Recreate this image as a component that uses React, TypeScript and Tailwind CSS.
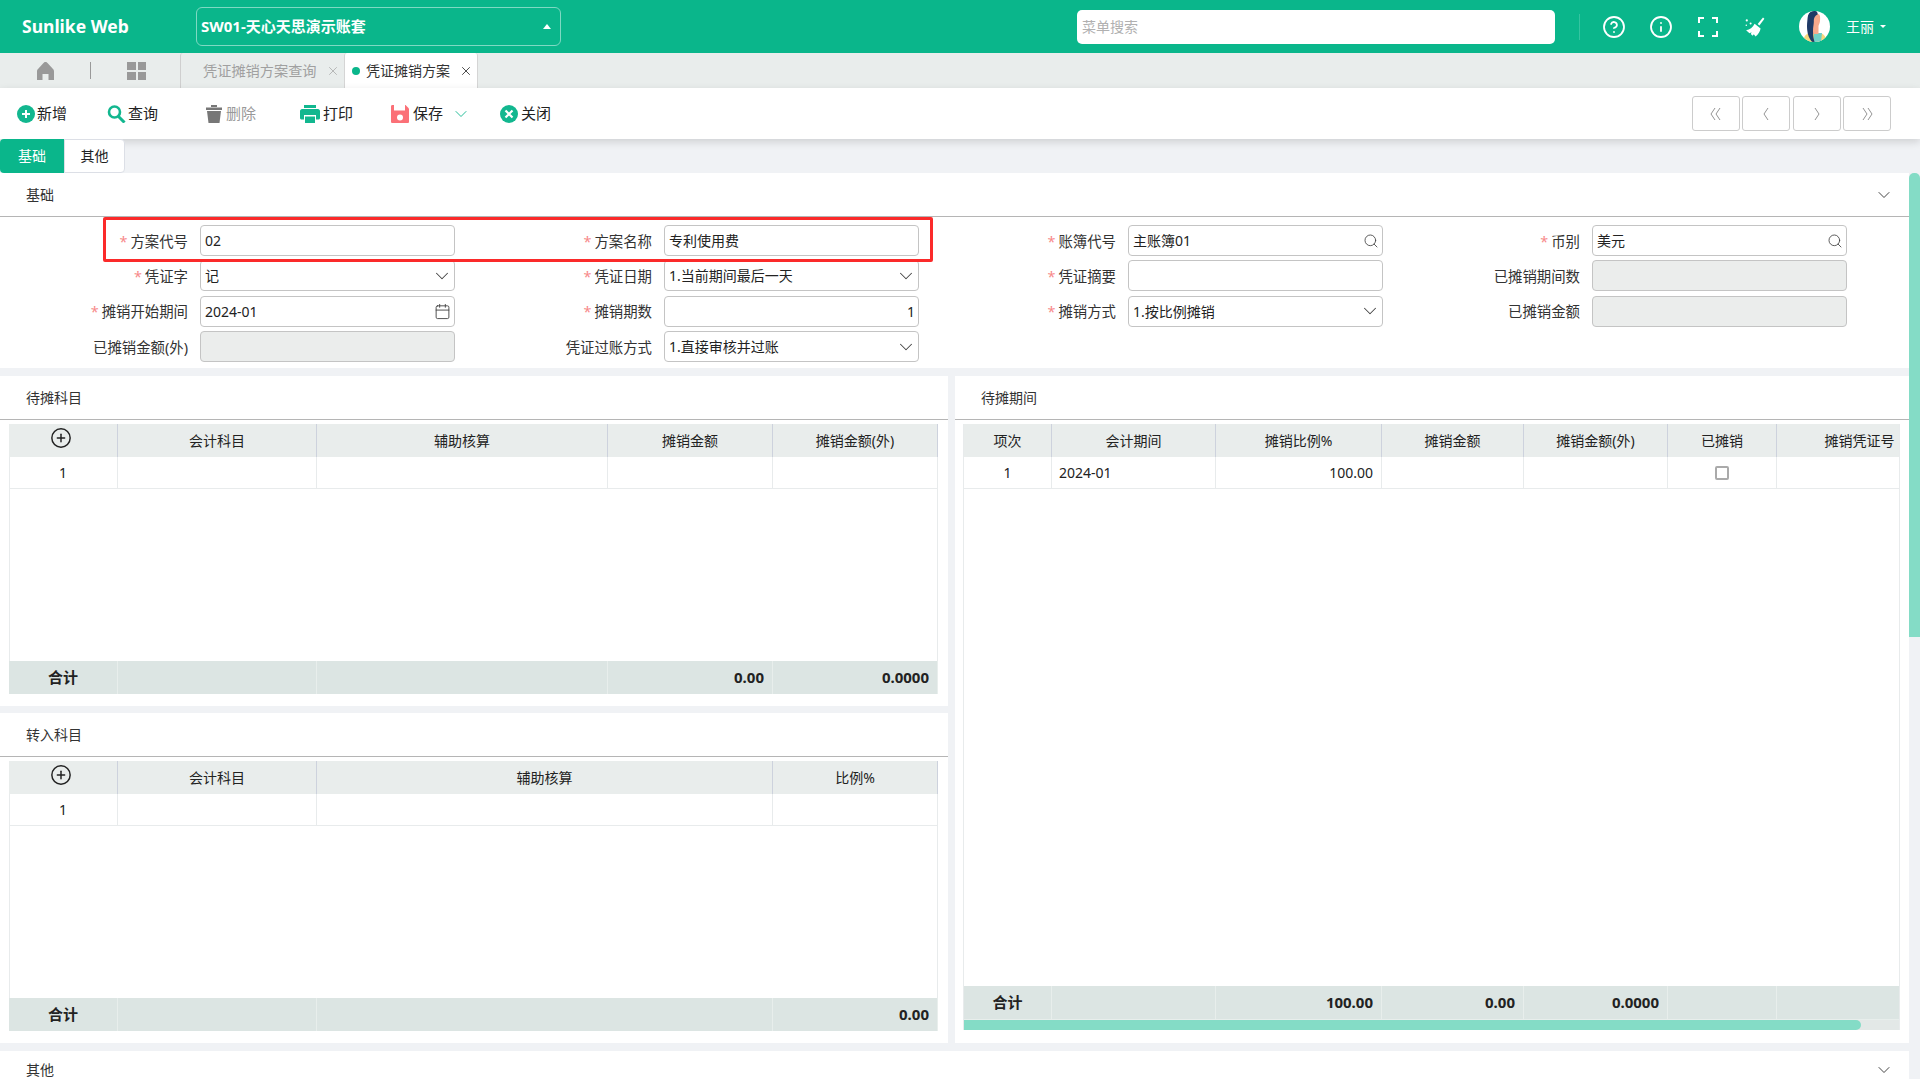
import { Calendar, ChevronDown, CircleHelp, CirclePlus, Info, Search, X } from "lucide-react";

function Broom() {
  return (
    <svg width="20" height="20" viewBox="0 0 20 20" fill="white">
      <path d="M18 .6l1.4 1.2-5 6.6-1.7-1.4z" />
      <path d="M9.6 6.8l6 4.7c-.6 3-2.2 5.800-5 8l-1.800-2.300-1.200 1.500-1.800-1.700.8-1.700-2.100 1-3.400-3.100c3.700-.4 6.700-2.700 8.500-6.400z" />
      <circle cx="1.800" cy="3.400" r="1.100" />
      <circle cx="5.600" cy="6.600" r="1" />
      <circle cx="1.300" cy="8.200" r="0.800" />
    </svg>
  );
}

function Avatar() {
  return (
    <svg width="31" height="31" viewBox="0 0 31 31">
      <clipPath id="avatar-clip"><circle cx="15.500" cy="15.500" r="15.500" /></clipPath>
      <g clipPath="url(#avatar-clip)">
        <rect width="31" height="31" fill="white" />
        <path d="M4 31c.5-5 2.500-8 6-9h12c3 1 5 4 6 9z" fill="#f6d67c" />
        <path d="M15 22h8l-1 9h-7z" fill="#6fd0c8" />
        <path d="M14 3h5c2 0 2.500 3 2 7-.3 2-1 3.500-1.500 5v8h-5.500z" fill="#f7a98c" />
        <path d="M17 0c-5-.8-8 2-8.400 7-.3 4-.9 7-.4 12 .4 5 2.300 9 4.800 12h2.500c-.8-3-1.500-7-1.500-11 0-4 1-7 .8-10-.1-3 1.200-5.500 3.700-6.500.8-.3-.5-3.300-1.500-3.500z" fill="#1f3a66" />
      </g>
    </svg>
  );
}

function HeaderBar() {
  return (
    <header className="flex h-[53px] shrink-0 items-center bg-[#0ab68b] text-white">
      <div className="w-[196px] pl-[22px] text-[17.500px] font-bold">Sunlike Web</div>
      <div className="flex h-[39px] w-[365px] items-center justify-between rounded-[6px] border border-[#7fd9c3] pl-[4px] pr-[9px] text-[15px] font-bold">
        <span>SW01-天心天思演示账套</span>
        <span className="h-0 w-0 border-x-[4px] border-b-[5px] border-x-transparent border-b-white" />
      </div>
      <div className="ml-[516px] flex h-[34px] w-[478px] items-center rounded-[5px] bg-white pl-[5px] text-[14px] text-[#b0b0b0]">菜单搜索</div>
      <div className="ml-[24px] h-[26px] w-px bg-[#35c4a1]" />
      <div className="ml-[22px] flex w-[24px] justify-center"><CircleHelp size={24} strokeWidth={1.800} /></div>
      <div className="ml-[23px] flex w-[24px] justify-center"><Info size={24} strokeWidth={1.800} /></div>
      <div className="ml-[23px] flex w-[24px] justify-center">
        <svg width="20" height="20" viewBox="0 0 20 20" fill="none" stroke="white" strokeWidth="2">
          <path d="M1 6V1h5M14 1h5v5M19 14v5h-5M6 19H1v-5" />
        </svg>
      </div>
      <div className="ml-[23px] flex w-[24px] justify-center"><Broom /></div>
      <div className="ml-[32px]"><Avatar /></div>
      <span className="ml-[16px] text-[14px]">王丽</span>
      <span className="ml-[6px] h-0 w-0 border-x-[3px] border-t-[3px] border-x-transparent border-t-white" />
    </header>
  );
}

function TabBar() {
  return (
    <div className="flex h-[35px] shrink-0 items-center bg-[#e9edec]">
      <svg className="ml-[37px]" width="17" height="18" viewBox="0 0 17 18" fill="#999999">
        <path d="M8.500 0c1 0 1.500.5 2 1l5.500 6c.7.800 1 1.300 1 2.500V18h-5.500v-6h-6v6H0V9.500C0 8.300.3 7.800 1 7l5.500-6c.5-.5 1-1 2-1z" />
      </svg>
      <div className="ml-[36px] h-[17px] w-px bg-[#999999]" />
      <div className="ml-[36px] grid h-[18px] w-[19px] grid-cols-2 gap-[2px]">
        <div className="bg-[#999999]" />
        <div className="bg-[#999999]" />
        <div className="bg-[#999999]" />
        <div className="bg-[#999999]" />
      </div>
      <div className="ml-[34px] flex h-full w-[164px] items-center rounded-t-[3px] border-l border-[#cfcfcf] pl-[22px] text-[14.200px] text-[#a0a0a0]">
        <span>凭证摊销方案查询</span>
        <X size={14} strokeWidth={1.100} className="ml-[9px] text-[#999999]" />
      </div>
      <div className="flex h-full w-[134px] items-center rounded-t-[3px] border-x border-[#d5d5d5] bg-white pl-[7px] text-[14px] text-[#333333]">
        <span className="h-[8px] w-[8px] rounded-full bg-[#0ab68b]" />
        <span className="ml-[6px]">凭证摊销方案</span>
        <X size={14} strokeWidth={1.500} className="ml-[9px] text-[#333333]" />
      </div>
    </div>
  );
}

function ToolButton({ icon, label, width, muted }: { icon: React.ReactNode; label: string; width: string; muted?: boolean }) {
  return (
    <div className={`flex items-center gap-[2px] text-[15px] leading-[20px] ${width} ${muted ? "text-[#999999]" : "text-[#222222]"}`}>
      {icon}
      <span className="-mt-[1px]">{label}</span>
    </div>
  );
}

function NavArrow({ d }: { d: string }) {
  return (
    <div className="flex h-[35px] w-[48px] items-center justify-center rounded-[3px] border border-[#cccccc]">
      <svg width="12" height="14" viewBox="0 0 12 14" fill="none" stroke="#888888" strokeWidth="0.900">
        <path d={d} />
      </svg>
    </div>
  );
}

function Toolbar() {
  return (
    <div className="relative z-10 flex h-[51px] shrink-0 items-center justify-between bg-white pl-[17px] pr-[29px] shadow-[0_3px_8px_rgba(0,0,0,0.14)]">
      <div className="flex items-center">
        <ToolButton
          width="w-[90px]"
          label="新增"
          icon={
            <svg width="18" height="18" viewBox="0 0 18 18">
              <circle cx="9" cy="9" r="9" fill="#12b78f" />
              <path d="M9 5v8M5 9h8" stroke="white" strokeWidth="2" />
            </svg>
          }
        />
        <ToolButton
          width="w-[99px]"
          label="查询"
          icon={
            <svg width="19" height="18" viewBox="0 0 19 18" fill="none" stroke="#12b78f">
              <circle cx="7.500" cy="7" r="5.500" strokeWidth="2.600" />
              <path d="M11.500 11.500l6 6" strokeWidth="3" />
            </svg>
          }
        />
        <ToolButton
          width="w-[94px]"
          label="删除"
          muted
          icon={
            <svg width="16" height="18" viewBox="0 0 16 18" fill="#777777" className="mr-[2px]">
              <path d="M5 0h6v2H5z" />
              <path d="M0 2.500h16V5H0z" />
              <path d="M1 6h14l-1.500 12h-11z" />
            </svg>
          }
        />
        <ToolButton
          width="w-[91px]"
          label="打印"
          icon={
            <svg width="20" height="18" viewBox="0 0 20 18" fill="#12b78f" className="mr-[1px]">
              <path d="M4 0h12v3H4z" />
              <path d="M2 4h16c1 0 2 1 2 2v7c0 1-1 1.500-2 1.500h-2V10H4v4.500H2c-1 0-2-.5-2-1.500V6c0-1 1-2 2-2z" />
              <path d="M5 11.500h10V18H5z" />
            </svg>
          }
        />
        <ToolButton
          width="w-[109px]"
          label="保存"
          icon={
            <svg width="18" height="18" viewBox="0 0 18 18" className="mr-[2px]">
              <path d="M1.500 0h13L18 3.500V16.500c0 1-.5 1.500-1.500 1.500h-15C.5 18 0 17.500 0 16.500v-15C0 .5.500 0 1.500 0z" fill="#fb7077" />
              <path d="M3 0h11v5.500H3z" fill="white" />
              <circle cx="9" cy="12.500" r="3" fill="white" />
            </svg>
          }
        />
        <ChevronDown size={20} strokeWidth={1.100} className="-ml-[49px] mr-[29px] text-[#12b78f]" />
        <ToolButton
          width="w-[60px]"
          label="关闭"
          icon={
            <svg width="18" height="18" viewBox="0 0 18 18" className="mr-[1px]">
              <circle cx="9" cy="9" r="9" fill="#12b78f" />
              <path d="M5.500 5.500l7 7M12.500 5.500l-7 7" stroke="white" strokeWidth="2.200" />
            </svg>
          }
        />
      </div>
      <div className="flex gap-[2.500px]">
        <NavArrow d="M5 1L1 7l4 6M10 1L6 7l4 6" />
        <NavArrow d="M8 1L4 7l4 6" />
        <NavArrow d="M4 1l4 6-4 6" />
        <NavArrow d="M2 1l4 6-4 6M7 1l4 6-4 6" />
      </div>
    </div>
  );
}

function Field({ label, required, value, kind, right }: { label: string; required?: boolean; value?: string; kind?: "select" | "lookup" | "date" | "disabled"; right?: boolean }) {
  return (
    <div className="flex h-[31px]">
      <div className="flex w-[188px] items-center justify-end pt-[2px] text-[14.400px] text-[#333333]">
        {required && <span className="mr-[3px] text-[#f78989]">*</span>}
        {label}
      </div>
      <div className={`ml-[12px] flex h-[31px] w-[255px] items-center justify-between rounded-[4px] border border-[#c4c4c4] pl-[4px] pr-[3px] text-[14px] text-[#222222] ${kind === "disabled" ? "bg-[#ebedec]" : "bg-white"}`}>
        <span className={right ? "w-full text-right" : ""}>{value}</span>
        {kind === "select" && <ChevronDown size={22} strokeWidth={1.100} className="-mr-[2px] shrink-0 text-[#444444]" />}
        {kind === "lookup" && <Search size={16} strokeWidth={1.300} className="shrink-0 text-[#444444]" />}
        {kind === "date" && <Calendar size={17} strokeWidth={1.300} className="shrink-0 text-[#444444]" />}
      </div>
    </div>
  );
}

function BasicSection() {
  return (
    <section className="h-[195px] shrink-0 bg-white">
      <SectionHeader title="基础" arrow />
      <div className="relative grid grid-cols-[464px_464px_464px_464px] gap-y-[4.400px] pt-[8px]">
        <Field required label="方案代号" value="02" />
        <Field required label="方案名称" value="专利使用费" />
        <Field required label="账簿代号" value="主账簿01" kind="lookup" />
        <Field required label="币别" value="美元" kind="lookup" />
        <Field required label="凭证字" value="记" kind="select" />
        <Field required label="凭证日期" value="1.当前期间最后一天" kind="select" />
        <Field required label="凭证摘要" />
        <Field label="已摊销期间数" kind="disabled" />
        <Field required label="摊销开始期间" value="2024-01" kind="date" />
        <Field required label="摊销期数" value="1" right />
        <Field required label="摊销方式" value="1.按比例摊销" kind="select" />
        <Field label="已摊销金额" kind="disabled" />
        <Field label="已摊销金额(外)" kind="disabled" />
        <Field label="凭证过账方式" value="1.直接审核并过账" kind="select" />
        {/* red annotation around the first two fields */}
        <div className="absolute left-[103px] top-0 h-[45px] w-[830px] rounded-[2px] border-[3px] border-[#fb2a2a]" />
      </div>
    </section>
  );
}

function SectionHeader({ title, arrow }: { title: string; arrow?: boolean }) {
  return (
    <div className="flex h-[44px] items-center justify-between border-b border-[#b5b5b5] pl-[26px] pr-[15px] text-[14px] text-[#333333]">
      <span>{title}</span>
      {arrow && <ChevronDown size={20} strokeWidth={1.100} className="text-[#333333]" />}
    </div>
  );
}

type Cell = { text?: string; align?: "left" | "right" | "center" };

function GridRow({ cols, cells, className, divider, bold }: { cols: string; cells: (Cell | React.ReactNode)[]; className: string; divider: string; bold?: boolean }) {
  return (
    <div className={`grid ${cols} ${className}`}>
      {cells.map((c, i) => {
        const cell = (c && typeof c === "object" && "align" in c ? c : { text: undefined, node: c }) as Cell & { node?: React.ReactNode };
        const align = cell.align === "right" ? "justify-end pr-[8px]" : cell.align === "left" ? "justify-start pl-[7px]" : "justify-center";
        return (
          <div key={i} className={`flex items-center overflow-hidden whitespace-nowrap border-r text-[#222222] ${divider} ${align} ${bold ? "text-[15px] font-bold" : "text-[14px]"}`}>
            {cell.text ?? cell.node}
          </div>
        );
      })}
    </div>
  );
}

const c = (text: string, align: Cell["align"] = "center"): Cell => ({ text, align });

function AddIcon() {
  return <CirclePlus size={22} strokeWidth={1.600} className="mb-[5px] mr-[4px] text-[#222222]" />;
}

function SideTable({ cols, head, row, foot }: { cols: string; head: React.ReactNode[]; row: React.ReactNode[]; foot: React.ReactNode[] }) {
  return (
    <div className="ml-[9px] mt-[4px] flex h-[270px] w-[929px] flex-col border-x border-[#e8ebec]">
      <GridRow cols={cols} cells={head} className="-mx-px h-[33px] bg-[#e9edec]" divider="border-[#cdd2dd]" />
      <GridRow cols={cols} cells={row} className="-mx-px h-[32px] border-b border-[#e8ebec]" divider="border-[#e8ebec]" />
      <div className="flex-1" />
      <GridRow cols={cols} cells={foot} bold className="-mx-px h-[33px] bg-[#dce5e3]" divider="border-[#e8eeec]" />
    </div>
  );
}

function DetailPanel() {
  const cols = "grid-cols-[88px_164px_166px_142px_144px_109px_166px]";
  return (
    <section className="h-[667px] w-[954px] bg-white">
      <SectionHeader title="待摊期间" />
      <div className="ml-[8px] mt-[4px] flex h-[606px] w-[937px] flex-col overflow-hidden border-x border-[#e8ebec]">
        <div className="w-[979px]">
          <GridRow
            cols={cols}
            className="h-[33px] bg-[#e9edec]"
            divider="border-[#cdd2dd]"
            cells={[c("项次"), c("会计期间"), c("摊销比例%"), c("摊销金额"), c("摊销金额(外)"), c("已摊销"), c("摊销凭证号")]}
          />
          <GridRow
            cols={cols}
            className="h-[32px] border-b border-[#e8ebec]"
            divider="border-[#e8ebec]"
            cells={[
              c("1"),
              c("2024-01", "left"),
              c("100.00", "right"),
              c(""),
              c(""),
              <span className="h-[14px] w-[14px] rounded-[2px] border-2 border-[#aaaaaa]" />,
              c(""),
            ]}
          />
        </div>
        <div className="flex-1" />
        <div className="w-[979px]">
          <GridRow
            cols={cols}
            bold
            className="h-[33px] bg-[#dce5e3]"
            divider="border-[#e8eeec]"
            cells={[c("合计"), c(""), c("100.00", "right"), c("0.00", "right"), c("0.0000", "right"), c(""), c("")]}
          />
        </div>
        <div className="h-[11px] w-full border-t border-[#e8eeec] bg-[#e3e8e7]">
          <div className="h-full w-[897px] rounded-r-full bg-[#84dcc6]" />
        </div>
      </div>
    </section>
  );
}

export default function App() {
  const table1 = "grid-cols-[109px_199px_291px_165px_165px]";
  const table2 = "grid-cols-[109px_199px_456px_165px]";
  return (
    <div className="flex h-[1079px] w-[1920px] flex-col overflow-hidden bg-[#f0f2f5] font-['Noto_Sans','Noto_Sans_CJK_SC',sans-serif]">
      <HeaderBar />
      <TabBar />
      <Toolbar />
      <div className="flex h-[34px] shrink-0 items-stretch text-[14px]">
        <div className="relative z-20 flex w-[64px] items-center justify-center rounded-l-[4px] bg-[#0ab68b] pb-[2px] text-white">基础</div>
        <div className="relative z-20 flex w-[61px] items-center justify-center rounded-r-[4px] border border-[#dcdfe6] bg-white pb-[2px] text-[#222222]">其他</div>
      </div>
      <div className="flex min-h-0 flex-1">
        <main className="flex w-[1909px] shrink-0 flex-col gap-[8px]">
          <BasicSection />
          <div className="flex shrink-0 gap-[7px]">
            <div className="flex w-[948px] flex-col gap-[7px]">
              <section className="h-[330px] bg-white">
                <SectionHeader title="待摊科目" />
                <SideTable
                  cols={table1}
                  head={[<AddIcon />, c("会计科目"), c("辅助核算"), c("摊销金额"), c("摊销金额(外)")]}
                  row={[c("1"), c(""), c(""), c(""), c("")]}
                  foot={[c("合计"), c(""), c(""), c("0.00", "right")
                    , c("0.0000", "right")]}
                />
              </section>
              <section className="h-[330px] bg-white">
                <SectionHeader title="转入科目" />
                <SideTable
                  cols={table2}
                  head={[<AddIcon />, c("会计科目"), c("辅助核算"), c("比例%")]}
                  row={[c("1"), c(""), c(""), c("")]}
                  foot={[c("合计"), c(""), c(""), c("0.00", "right")]}
                />
              </section>
            </div>
            <DetailPanel />
          </div>
          <section className="min-h-0 flex-1 bg-white">
            <div className="flex h-[28px] items-center justify-between pb-[2px] pl-[26px] pr-[15px] pt-[12px] text-[14px] leading-[14px] text-[#333333]">
              <span>其他</span>
              <ChevronDown size={20} strokeWidth={1.100} />
            </div>
          </section>
        </main>
        <div className="flex-1">
          <div className="h-[464px] rounded-t-[5px] bg-[#84dcc6]" />
        </div>
      </div>
    </div>
  );
}
